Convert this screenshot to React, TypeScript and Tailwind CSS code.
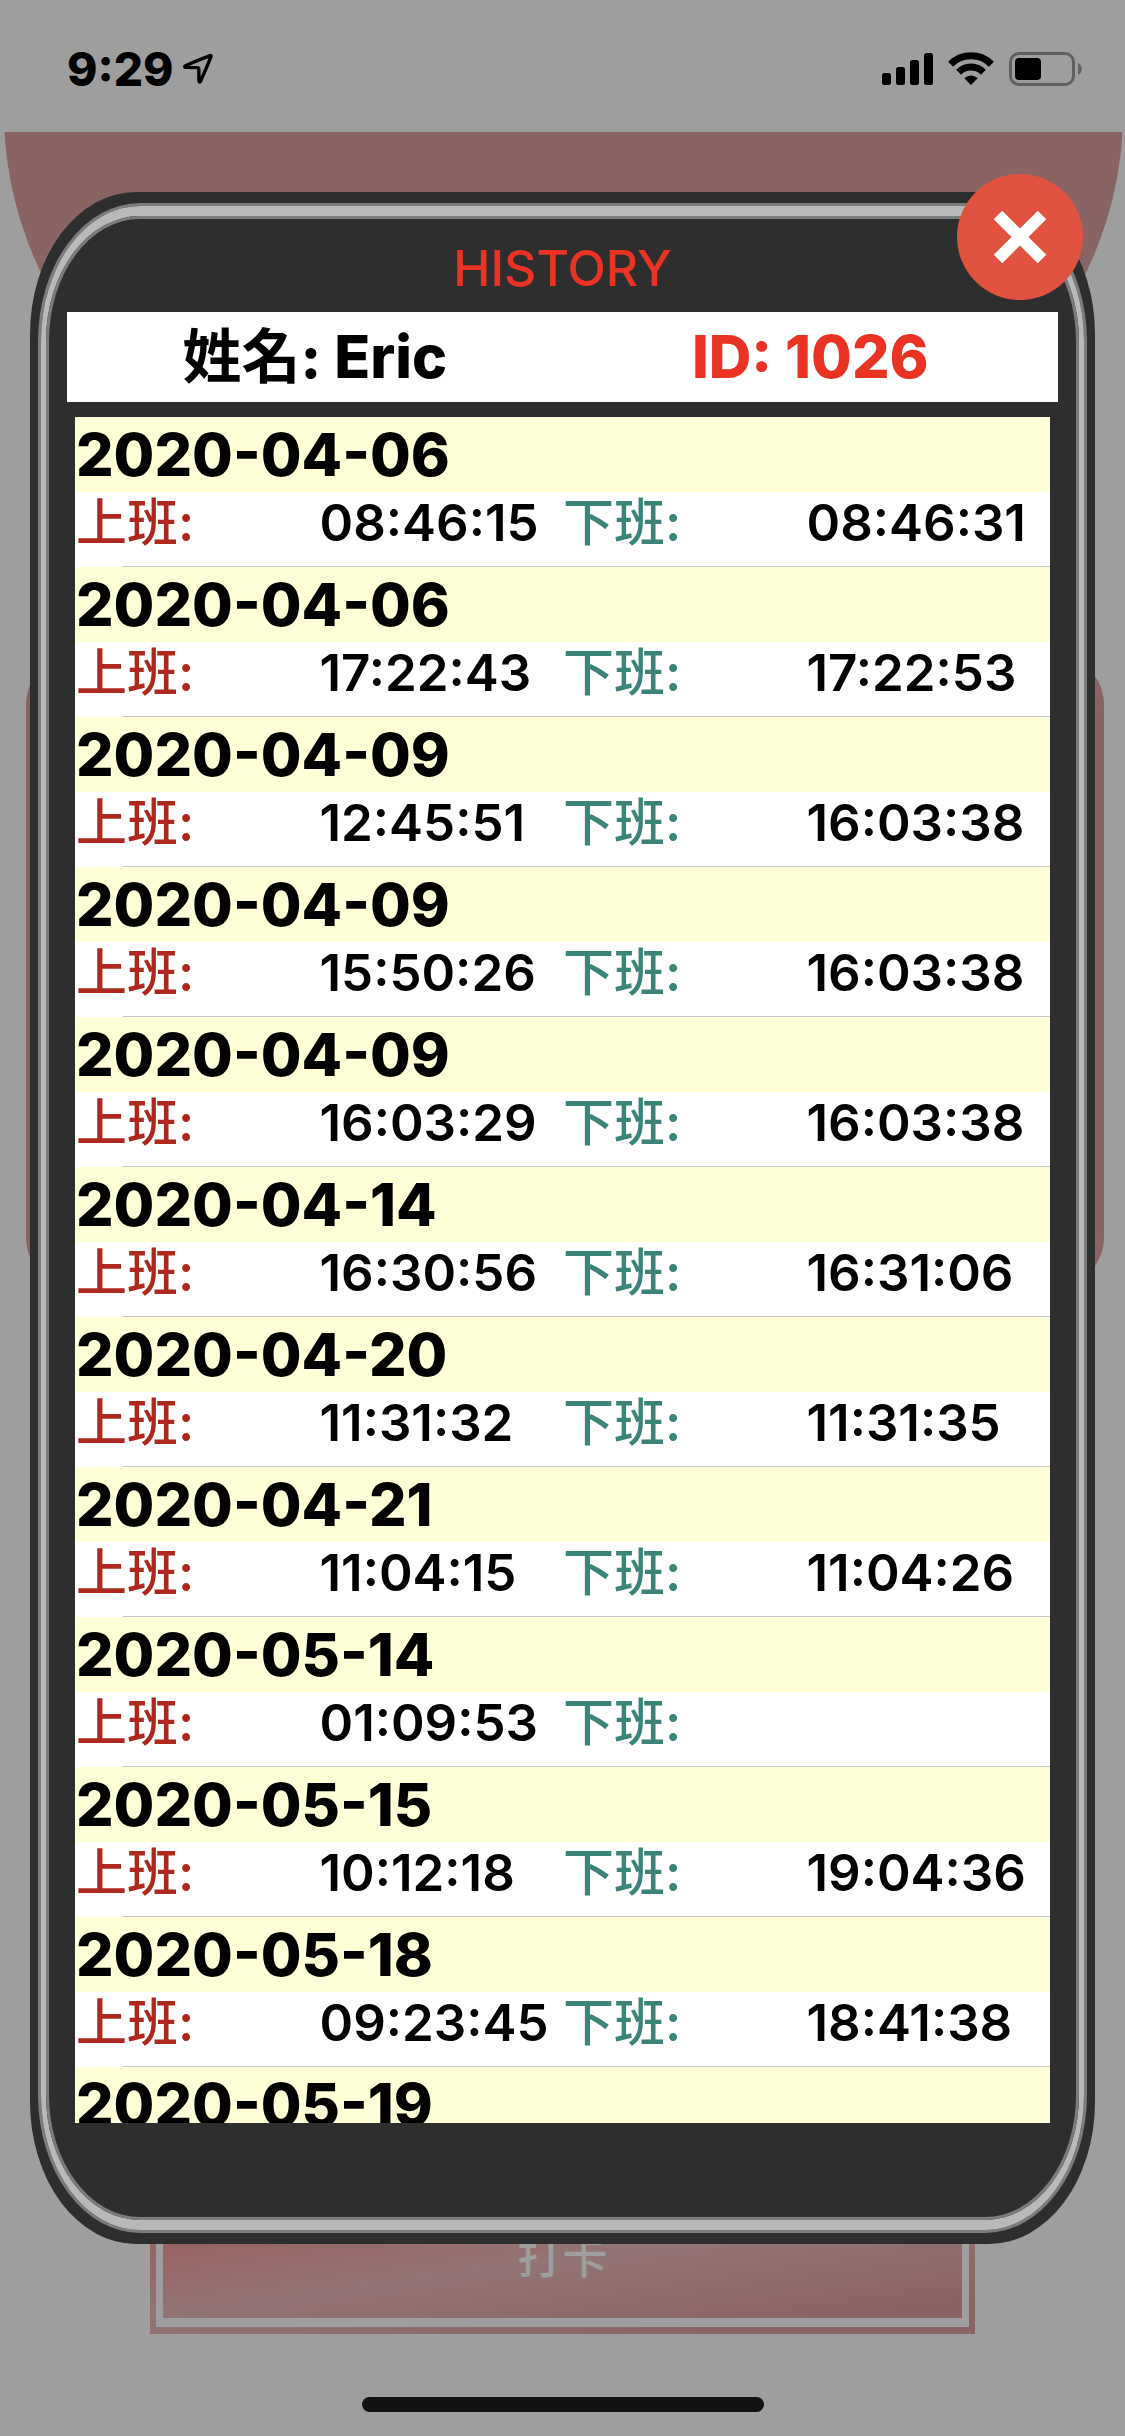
type Punch = { date: string; start: string; end: string };

const punches: Punch[] = [
  { date: "2020-04-06", start: "08:46:15", end: "08:46:31" },
  { date: "2020-04-06", start: "17:22:43", end: "17:22:53" },
  { date: "2020-04-09", start: "12:45:51", end: "16:03:38" },
  { date: "2020-04-09", start: "15:50:26", end: "16:03:38" },
  { date: "2020-04-09", start: "16:03:29", end: "16:03:38" },
  { date: "2020-04-14", start: "16:30:56", end: "16:31:06" },
  { date: "2020-04-20", start: "11:31:32", end: "11:31:35" },
  { date: "2020-04-21", start: "11:04:15", end: "11:04:26" },
  { date: "2020-05-14", start: "01:09:53", end: "" },
  { date: "2020-05-15", start: "10:12:18", end: "19:04:36" },
  { date: "2020-05-18", start: "09:23:45", end: "18:41:38" },
  { date: "2020-05-19", start: "", end: "" },
];

function LocationIcon() {
  return (
    <svg width="30" height="32" viewBox="0 0 30 32" fill="none" aria-hidden="true">
      <path
        d="M27.2 2.6 C20 5.2 9 9.8 2.4 12.8 C1.4 13.4 1.6 14.4 2.8 14.4 L14.2 14.6 C15.4 14.6 15.8 15 15.8 16.2 L16 28 C16.1 29.4 17 29.4 17.5 28.3 C20.8 21 25.4 10.4 28 3.4 C28.2 2.7 27.9 2.4 27.2 2.6 Z"
        stroke="#000"
        strokeWidth="3.4"
        strokeLinejoin="round"
      />
    </svg>
  );
}

function SignalIcon() {
  return (
    <svg width="51" height="34" viewBox="0 0 51 34" aria-hidden="true">
      <rect x="0" y="21" width="9" height="12" rx="2.5" />
      <rect x="14" y="15" width="9" height="18" rx="2.5" />
      <rect x="28" y="8" width="9" height="25" rx="2.5" />
      <rect x="42" y="1" width="9" height="32" rx="2.5" />
    </svg>
  );
}

function WifiIcon() {
  return (
    <svg width="46" height="34" viewBox="0 0 46 34" fill="none" stroke="#000" strokeWidth="7" aria-hidden="true">
      <path d="M2.6 12.2 A29 29 0 0 1 43.4 12.2" />
      <path d="M10.6 20.2 A17.5 17.5 0 0 1 35.4 20.2" />
      <path d="M16.3 26.3 A9.5 9.5 0 0 1 29.7 26.3 L23 33 Z" fill="#000" stroke="none" />
    </svg>
  );
}

function BatteryIcon() {
  return (
    <svg width="74" height="34" viewBox="0 0 74 34" aria-hidden="true">
      <rect x="1.5" y="1.5" width="63" height="31" rx="8.5" fill="none" stroke="#606060" strokeWidth="3" />
      <rect x="6" y="6" width="26" height="22" rx="4" />
      <path d="M69 11 C74 13.5 74 20.5 69 23 Z" fill="#606060" />
    </svg>
  );
}

function StatusBar() {
  return (
    <header className="flex h-[132px] shrink-0 items-center justify-between pt-1.5 pr-[42px] pl-[67px]">
      <div className="flex items-center gap-2.5">
        <span className="text-[46px] leading-none font-extrabold">9:29</span>
        <LocationIcon />
      </div>
      <div className="flex items-center gap-[15px]">
        <SignalIcon />
        <WifiIcon />
        <BatteryIcon />
      </div>
    </header>
  );
}

function PunchRow({ date, start, end }: Punch) {
  return (
    <li className="relative h-[150px] bg-white">
      <h3 className="h-[75px] bg-[#feffd7] pl-px text-[59px] leading-[76px] font-extrabold">{date}</h3>
      <dl className="grid grid-cols-4 pl-px text-[51px] leading-[62px] font-semibold">
        <dt className="text-[#ae281d]">
          <span className="font-medium">上班</span>:
        </dt>
        <dd>{start}</dd>
        <dt className="text-[#3a8577]">
          <span className="font-medium">下班</span>:
        </dt>
        <dd>{end}</dd>
      </dl>
      <div className="absolute right-0 bottom-0 left-12 h-px bg-[#c6c6c8]" />
    </li>
  );
}

function HistoryDialog() {
  return (
    <div className="absolute inset-0 flex px-[30px] py-[192px]">
      <section
        role="dialog"
        aria-labelledby="history-title"
        className="relative flex min-w-0 flex-1 rounded-[106px/142px] bg-[#2e2e2e] px-2 py-[11px]"
      >
        <div className="flex min-w-0 flex-1 rounded-[102px/138px] border-3 border-[#7c7c7c]">
          <div className="flex min-w-0 flex-1 rounded-[99px/135px] border-x-[5px] border-y-[10px] border-[#b9b9b9]">
            <div className="flex min-w-0 flex-1 flex-col rounded-[94px/125px] border-3 border-[#7c7c7c] pb-[94px]">
              <h1
                id="history-title"
                className="h-[93px] shrink-0 pt-1 text-center text-[50px] leading-[90px] font-medium text-[#eb3323]"
              >
                HISTORY
              </h1>
              <div className="mx-[18px] grid h-[90px] shrink-0 grid-cols-2 bg-white text-center text-[59px] leading-[90px] font-extrabold">
                <p>
                  <span className="font-bold">姓名</span>: Eric
                </p>
                <p className="text-[#eb3323]">ID: 1026</p>
              </div>
              <ul className="mx-[26px] mt-[15px] min-h-0 flex-1 overflow-y-auto [scrollbar-width:none]">
                {punches.map((p, i) => (
                  <PunchRow key={i} {...p} />
                ))}
              </ul>
            </div>
          </div>
        </div>
        <button
          type="button"
          aria-label="Close"
          className="absolute -top-[18px] right-3 flex size-[126px] items-center justify-center rounded-full bg-[#e25241]"
        >
          <svg width="54" height="54" viewBox="0 0 54 54" stroke="#fff" strokeWidth="12" aria-hidden="true">
            <path d="M5 5 49 49 M49 5 5 49" />
          </svg>
        </button>
      </section>
    </div>
  );
}

export default function App() {
  return (
    <div className="relative flex min-h-screen flex-col bg-[#9e9e9e] font-['Inter','Noto_Sans_CJK_TC',sans-serif] text-black">
      <StatusBar />
      <div className="h-[428px] shrink-0 overflow-hidden pr-[2px] pl-1">
        <div className="-mt-[466px] h-[894px] rounded-[50%] bg-[#8a6462]" />
      </div>
      <div className="mt-[95px] mr-[21px] ml-[26px] h-[632px] rounded-[50px] border-[12px] border-[#8a6462]" />
      <main className="mt-auto px-[150px]">
        <button
          type="button"
          className="block w-full bg-linear-[172deg,#9a5a5a_10%,#937474_50%,#8a6462_85%] px-1.5 py-[7px]"
        >
          <span className="block border-x-[7px] border-y-[9px] border-[#9e9e9e] text-[45px] leading-[120px] font-medium text-[#9e9e9e]">
            打卡
          </span>
        </button>
      </main>
      <div className="mx-auto mt-[63px] mb-6 h-[15px] w-[402px] rounded-full bg-[#121212]" />
      <HistoryDialog />
    </div>
  );
}
